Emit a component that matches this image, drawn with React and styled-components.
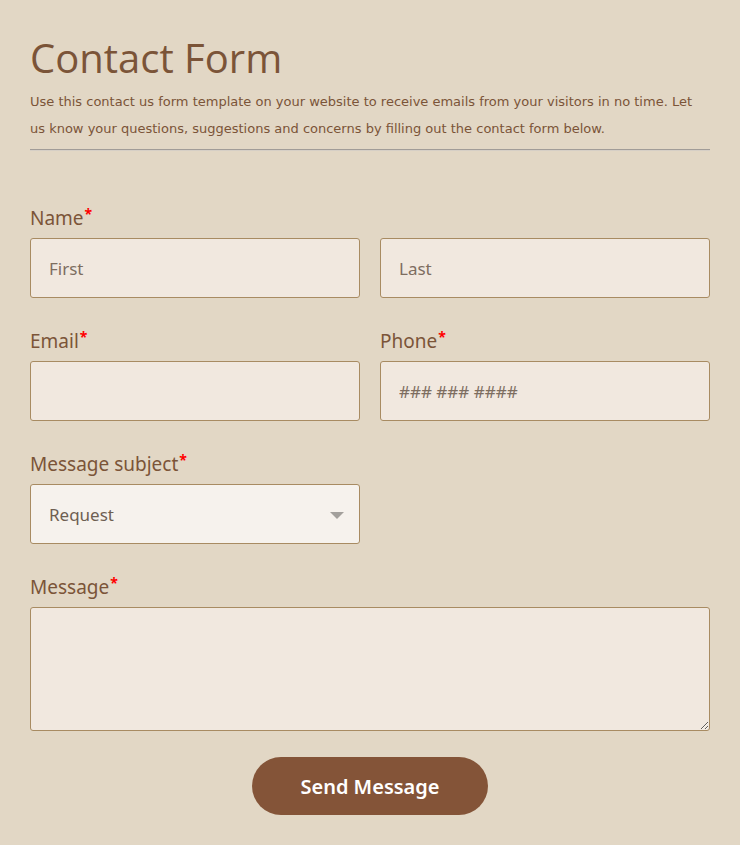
import React from "react"
import styled, { createGlobalStyle } from "styled-components"

const GlobalStyle = createGlobalStyle`
    html, body {
        margin: 0;
        padding: 0;
        background-color: #e2d7c5;
    }
`

const Page = styled.div`
    width: 680px;
    padding: 28px 30px 30px 30px;
    box-sizing: content-box;
`

const Title = styled.h1`
    margin: 0;
    font-family: "Open Sans", sans-serif;
    font-weight: 400;
    font-size: 40px;
    line-height: 60px;
    color: #7b5438;
`

const Intro = styled.p`
    margin: 0;
    font-family: "DejaVu Sans", Verdana, sans-serif;
    font-size: 13px;
    line-height: 27px;
    color: #7b5438;
    padding-bottom: 7px;
    border-bottom: 1px solid #a19c98;
    box-shadow: 0 1px 0 #d6cfc6;
`

const Form = styled.form`
    display: flex;
    flex-direction: column;
    margin-top: 56px;
`

const Row = styled.div`
    display: grid;
    grid-template-columns: 1fr 1fr;
    column-gap: 20px;
    margin-bottom: 31px;
`

const Field = styled.div`
    display: flex;
    flex-direction: column;
    grid-column: ${(props) => (props.wide ? "1 / span 2" : "auto")};
`

const Pair = styled.div`
    display: grid;
    grid-template-columns: 1fr 1fr;
    column-gap: 20px;
`

const Label = styled.label`
    font-family: "Noto Sans", sans-serif;
    font-size: 19px;
    line-height: 24px;
    color: #7b5438;
    margin-bottom: 8px;
`

const Star = styled.span`
    color: #ff0000;
    font-size: 14px;
    font-weight: 700;
    vertical-align: top;
    line-height: 16px;
    margin-left: 1px;
`

const Input = styled.input`
    height: 60px;
    box-sizing: border-box;
    border: 1px solid #a88b62;
    border-radius: 3px;
    background-color: #f1e8df;
    padding: 0 18px;
    font-family: "Noto Sans", sans-serif;
    font-size: 17px;
    color: #6e5a4a;
    outline: none;

    &::placeholder {
        color: #7d6d5f;
    }
`

const SelectBox = styled.div`
    position: relative;
    height: 60px;
    box-sizing: border-box;
    border: 1px solid #a88b62;
    border-radius: 3px;
    background-color: #f6f2ed;
    display: flex;
    align-items: center;
    padding: 0 18px;
    font-family: "Noto Sans", sans-serif;
    font-size: 17px;
    color: #6e5f52;
`

const Arrow = styled.span`
    position: absolute;
    right: 15px;
    top: 27px;
    width: 0;
    height: 0;
    border-left: 7px solid transparent;
    border-right: 7px solid transparent;
    border-top: 7px solid #a3a09c;
`

const TextArea = styled.textarea`
    height: 124px;
    box-sizing: border-box;
    border: 1px solid #a88b62;
    border-radius: 3px;
    background-color: #f1e8df;
    padding: 12px 18px;
    font-family: "Noto Sans", sans-serif;
    font-size: 17px;
    outline: none;
`

const ButtonRow = styled.div`
    display: flex;
    justify-content: center;
    margin-top: -5px;
`

const SendButton = styled.button`
    width: 236px;
    height: 58px;
    border: none;
    border-radius: 29px;
    background-color: #845438;
    color: #ffffff;
    font-family: "Noto Sans", sans-serif;
    font-weight: 600;
    font-size: 20px;
    cursor: pointer;
`

const App = () => {
    return (
        <Page>
            <GlobalStyle />
            <Title>Contact Form</Title>
            <Intro>
                Use this contact us form template on your website to receive emails from your visitors in no time. Let us know your questions, suggestions and concerns by filling out the contact form below.
            </Intro>
            <Form onSubmit={(e) => e.preventDefault()}>
                <Row>
                    <Field wide>
                        <Label>Name<Star>*</Star></Label>
                        <Pair>
                            <Input placeholder="First" />
                            <Input placeholder="Last" />
                        </Pair>
                    </Field>
                </Row>
                <Row>
                    <Field>
                        <Label>Email<Star>*</Star></Label>
                        <Input />
                    </Field>
                    <Field>
                        <Label>Phone<Star>*</Star></Label>
                        <Input placeholder="### ### ####" />
                    </Field>
                </Row>
                <Row>
                    <Field>
                        <Label>Message subject<Star>*</Star></Label>
                        <SelectBox>
                            Request
                            <Arrow />
                        </SelectBox>
                    </Field>
                </Row>
                <Row>
                    <Field wide>
                        <Label>Message<Star>*</Star></Label>
                        <TextArea />
                    </Field>
                </Row>
                <ButtonRow>
                    <SendButton type="submit">Send Message</SendButton>
                </ButtonRow>
            </Form>
        </Page>
    )
}

export default App
